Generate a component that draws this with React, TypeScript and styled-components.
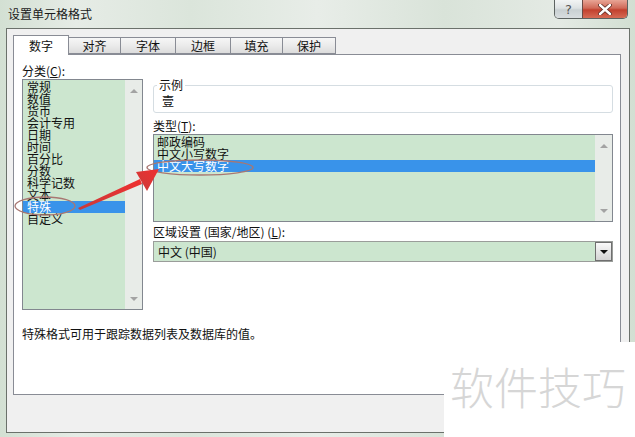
import styled, { createGlobalStyle } from "styled-components";

const GlobalStyle = createGlobalStyle`
  html, body {
    margin: 0;
    padding: 0;
    width: 635px;
    height: 437px;
    overflow: hidden;
    background: #dfe7df;
  }
  * {
    box-sizing: border-box;
  }
`;

const FONT = `"Noto Sans CJK SC", "Microsoft YaHei", sans-serif`;
const GREEN = "#cce6cf";
const BLUE = "#3993ea";

const categories = ["常规", "数值", "货币", "会计专用", "日期", "时间", "百分比", "分数", "科学记数", "文本", "特殊", "自定义"];
const types = ["邮政编码", "中文小写数字", "中文大写数字"];
const tabs = ["数字", "对齐", "字体", "边框", "填充", "保护"];
const tabWidths = [56, 53, 56, 56, 53, 54];

const Window = styled.div`
  position: relative;
  width: 635px;
  height: 437px;
  font-family: ${FONT};
  font-size: 12px;
  color: #111;
  background: linear-gradient(90deg, #d3e0d3 0%, #e6ece6 12%, #dbe5db 30%, #e8ede8 50%, #d9e3d9 70%, #e4eae4 88%, #d2dfd2 100%);
  display: flex;
  flex-direction: column;
`;

const TitleBar = styled.div`
  height: 28px;
  display: flex;
  align-items: flex-start;
  justify-content: space-between;
  padding-right: 7px;
`;

const Title = styled.div`
  padding: 6px 0 0 8px;
  line-height: 16px;
  font-size: 12px;
  color: #1a1a1a;
`;

const Caption = styled.div`
  display: flex;
  height: 19px;
  border: 1px solid #5d6361;
  border-top: none;
  border-radius: 0 0 5px 5px;
  overflow: hidden;
`;

const CaptionButton = styled.div<{ $close?: boolean }>`
  width: ${(p) => (p.$close ? 45 : 27)}px;
  display: flex;
  align-items: center;
  justify-content: center;
  color: #555;
  font-size: 13px;
  font-family: "DejaVu Sans", sans-serif;
  background: ${(p) =>
    p.$close
      ? "linear-gradient(180deg, #e8a595 0%, #d06a58 45%, #c2412e 55%, #d66b55 100%)"
      : "linear-gradient(180deg, #f2f4f4 0%, #dde2e3 45%, #c9d0d2 55%, #d8dddf 100%)"};
  border-left: ${(p) => (p.$close ? "1px solid #6b4a44" : "none")};
`;

const Client = styled.div`
  margin: 0 5px 0 6px;
  height: 405px;
  border: 1px solid #6b716b;
  background: #f0f0f0;
  padding: 6px 8px 0 6px;
`;

const TabRow = styled.div`
  display: flex;
  height: 19px;
  align-items: flex-start;
`;

const Tab = styled.div<{ $active?: boolean }>`
  position: relative;
  z-index: ${(p) => (p.$active ? 1 : 0)};
  height: ${(p) => (p.$active ? 20 : 17)}px;
  margin-top: ${(p) => (p.$active ? 0 : 2)}px;
  margin-left: ${(p) => (p.$active ? 0 : -1)}px;
  border: 1px solid #898c95;
  border-bottom: ${(p) => (p.$active ? "none" : "1px solid #898c95")};
  background: ${(p) => (p.$active ? "#ffffff" : "linear-gradient(180deg, #f6f6f6 0%, #ebebeb 50%, #dcdcdc 100%)")};
  display: flex;
  justify-content: center;
  align-items: center;
  font-size: 12px;
  line-height: 14px;
  padding-top: ${(p) => (p.$active ? 0 : 1)}px;
`;

const Panel = styled.div`
  height: 341px;
  border: 1px solid #898c95;
  background: #ffffff;
  padding: 8px 7px 0 8px;
`;

const Columns = styled.div`
  display: grid;
  grid-template-columns: 121px 460px;
  column-gap: 10px;
  align-items: start;
`;

const Column = styled.div<{ $top?: number }>`
  display: flex;
  flex-direction: column;
  padding-top: ${(p) => p.$top ?? 0}px;
`;

const Label = styled.div<{ $gap?: number }>`
  line-height: 15px;
  font-size: 12px;
  margin-top: ${(p) => p.$gap ?? 0}px;
  white-space: nowrap;
`;

const ListBox = styled.div<{ $h: number }>`
  margin-top: 1px;
  height: ${(p) => p.$h}px;
  border: 1px solid #82878f;
  background: ${GREEN};
  display: flex;
`;

const Items = styled.div<{ $pad: number }>`
  flex: 1;
  padding-top: 1px;
  display: flex;
  flex-direction: column;
  & > div {
    padding-left: ${(p) => p.$pad}px;
  }
`;

const Item = styled.div<{ $selected?: boolean }>`
  height: 12px;
  line-height: 12px;
  font-size: 12px;
  white-space: nowrap;
  color: ${(p) => (p.$selected ? "#ffffff" : "#111")};
  background: ${(p) => (p.$selected ? BLUE : "transparent")};
`;

const ScrollBar = styled.div`
  width: 17px;
  background: #e8ece8;
  display: flex;
  flex-direction: column;
  justify-content: space-between;
  align-items: center;
  padding: 9px 0 8px;
`;

const Arrow = styled.div<{ $down?: boolean; $color?: string }>`
  width: 0;
  height: 0;
  border-left: 4px solid transparent;
  border-right: 4px solid transparent;
  ${(p) =>
    p.$down
      ? `border-top: 4px solid ${p.$color ?? "#a3a3a3"};`
      : `border-bottom: 4px solid ${p.$color ?? "#a3a3a3"};`}
`;

const GroupBox = styled.fieldset`
  margin: 0;
  padding: 1px 8px 3px;
  border: 1px solid #d5dde2;
  border-radius: 3px;
  min-width: 0;
  & > legend {
    padding: 0 2px;
    margin-left: -5px;
    line-height: 14px;
    font-size: 12px;
  }
`;

const Sample = styled.div`
  line-height: 16px;
  font-size: 12px;
`;

const Combo = styled.div`
  margin-top: 2px;
  height: 21px;
  border: 1px solid #9a9d9a;
  background: ${GREEN};
  display: flex;
  align-items: center;
  justify-content: space-between;
  padding-left: 4px;
`;

const DropButton = styled.div`
  width: 17px;
  height: 19px;
  border: 1px solid #6f6f6f;
  background: linear-gradient(180deg, #fafafa 0%, #e6e6e6 50%, #d4d4d4 100%);
  display: flex;
  align-items: center;
  justify-content: center;
`;

const Description = styled.div`
  margin-top: 16px;
  line-height: 15px;
  font-size: 12px;
`;

const Overlay = styled.svg`
  position: absolute;
  left: 0;
  top: 0;
  pointer-events: none;
`;

const Watermark = styled.div`
  position: absolute;
  left: 444px;
  top: 342px;
  width: 191px;
  height: 95px;
  background: #ffffff;
  display: flex;
  align-items: flex-start;
  padding: 18px 0 0 6px;
  font-size: 44px;
  line-height: 52px;
  font-weight: 300;
  color: #d6d6d6;
  white-space: nowrap;
`;

export default function App() {
  return (
    <>
      <GlobalStyle />
      <Window>
        <TitleBar>
          <Title>设置单元格格式</Title>
          <Caption>
            <CaptionButton>?</CaptionButton>
            <CaptionButton $close>
              <svg width="14" height="11" viewBox="0 0 14 11">
                <path d="M2 1 L12 10 M12 1 L2 10" stroke="#5a2a22" strokeWidth="4" strokeLinecap="round" />
                <path d="M2 1 L12 10 M12 1 L2 10" stroke="#ffffff" strokeWidth="2.4" strokeLinecap="round" />
              </svg>
            </CaptionButton>
          </Caption>
        </TitleBar>
        <Client>
          <TabRow>
            {tabs.map((t, i) => (
              <Tab key={t} $active={i === 0} style={{ width: tabWidths[i] }}>
                {t}
              </Tab>
            ))}
          </TabRow>
          <Panel>
            <Columns>
              <Column>
                <Label>
                  分类(<u>C</u>):
                </Label>
                <ListBox $h={231}>
                  <Items $pad={4}>
                    {categories.map((c) => (
                      <Item key={c} $selected={c === "特殊"}>
                        {c}
                      </Item>
                    ))}
                  </Items>
                  <ScrollBar>
                    <Arrow />
                    <Arrow $down />
                  </ScrollBar>
                </ListBox>
              </Column>
              <Column $top={15}>
                <GroupBox>
                  <legend>示例</legend>
                  <Sample>壹</Sample>
                </GroupBox>
                <Label $gap={5}>
                  类型(<u>T</u>):
                </Label>
                <ListBox $h={88}>
                  <Items $pad={3}>
                    {types.map((t) => (
                      <Item key={t} $selected={t === "中文大写数字"}>
                        {t}
                      </Item>
                    ))}
                  </Items>
                  <ScrollBar>
                    <Arrow />
                    <Arrow $down />
                  </ScrollBar>
                </ListBox>
                <Label $gap={2}>
                  区域设置 (国家/地区) (<u>L</u>):
                </Label>
                <Combo>
                  <span>中文 (中国)</span>
                  <DropButton>
                    <Arrow $down $color="#111" />
                  </DropButton>
                </Combo>
              </Column>
            </Columns>
            <Description>特殊格式可用于跟踪数据列表及数据库的值。</Description>
          </Panel>
        </Client>
        <Overlay width="635" height="437" viewBox="0 0 635 437">
          <defs>
            <linearGradient id="arrowFill" x1="0" y1="1" x2="1" y2="0">
              <stop offset="0" stopColor="#c93a3a" />
              <stop offset="1" stopColor="#f03030" />
            </linearGradient>
          </defs>
          <ellipse cx="45" cy="206" rx="30" ry="9" fill="none" stroke="#a87772" strokeWidth="1.3" />
          <ellipse cx="200" cy="167.5" rx="53" ry="7.5" fill="none" stroke="#a87772" strokeWidth="1.3" />
          <path d="M78 208 L140 179 L142 184 L80 210 Z" fill="url(#arrowFill)" />
          <path d="M159 169 L136 172 L147 191 Z" fill="url(#arrowFill)" />
        </Overlay>
        <Watermark>软件技巧</Watermark>
      </Window>
    </>
  );
}
